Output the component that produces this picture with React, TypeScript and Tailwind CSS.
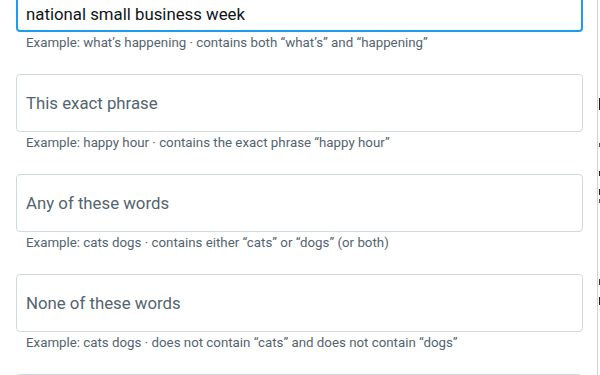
import React from "react";

const font = { fontFamily: "Roboto, 'Noto Sans', Arial, sans-serif" };

function Field({ placeholder, helper }: { placeholder: string; helper: string }) {
  return (
    <div className="mb-[23px]">
      <div className="h-[58px] border border-[#cfd9de] rounded-[4px] flex items-center px-[9px]">
        <span className="text-[16.8px] leading-6 text-[#536471]">{placeholder}</span>
      </div>
      <div className="pt-[3px] pl-[10px] text-[13.3px] leading-4 text-[#536471]">{helper}</div>
    </div>
  );
}

export default function App() {
  return (
    <div className="w-[600px] h-[375px] overflow-hidden bg-white flex" style={font}>
      <div className="flex-1 pl-4 pr-[14px]">
        <div className="mb-[23px]">
          <div className="-mt-[26px] h-[58px] border-2 border-[#1d9bf0] rounded-[4px] flex items-end px-[8px] pb-[4px]">
            <span className="text-[16.8px] leading-6 text-[#0f1419]">national small business week</span>
          </div>
          <div className="pt-[3px] pl-[10px] text-[13.3px] leading-4 text-[#536471]">
            Example: what’s happening · contains both “what’s” and “happening”
          </div>
        </div>
        <Field placeholder="This exact phrase" helper="Example: happy hour · contains the exact phrase “happy hour”" />
        <Field placeholder="Any of these words" helper="Example: cats dogs · contains either “cats” or “dogs” (or both)" />
        <Field placeholder="None of these words" helper="Example: cats dogs · does not contain “cats” and does not contain “dogs”" />
        <div className="h-[58px] border border-[#cfd9de] rounded-[4px]" />
      </div>
      <div className="w-[3px] flex">
        <div className="w-px bg-[#d4d4d4]" />
        <div className="w-px" />
        <div className="w-px flex flex-col">
          <div className="h-[98px]" />
          <div className="h-[12px] bg-[#222]" />
          <div className="h-[33px]" />
          <div className="h-[4px] bg-[#555]" />
          <div className="h-[24px]" />
          <div className="h-[5px] bg-[#222]" />
          <div className="h-[13px]" />
          <div className="h-[6px] bg-[#222]" />
          <div className="h-[4px]" />
          <div className="h-[4px] bg-[#555]" />
          <div className="h-[76px]" />
          <div className="h-[6px] bg-[#333]" />
          <div className="h-[12px]" />
          <div className="h-[8px] bg-[#222]" />
        </div>
      </div>
    </div>
  );
}
